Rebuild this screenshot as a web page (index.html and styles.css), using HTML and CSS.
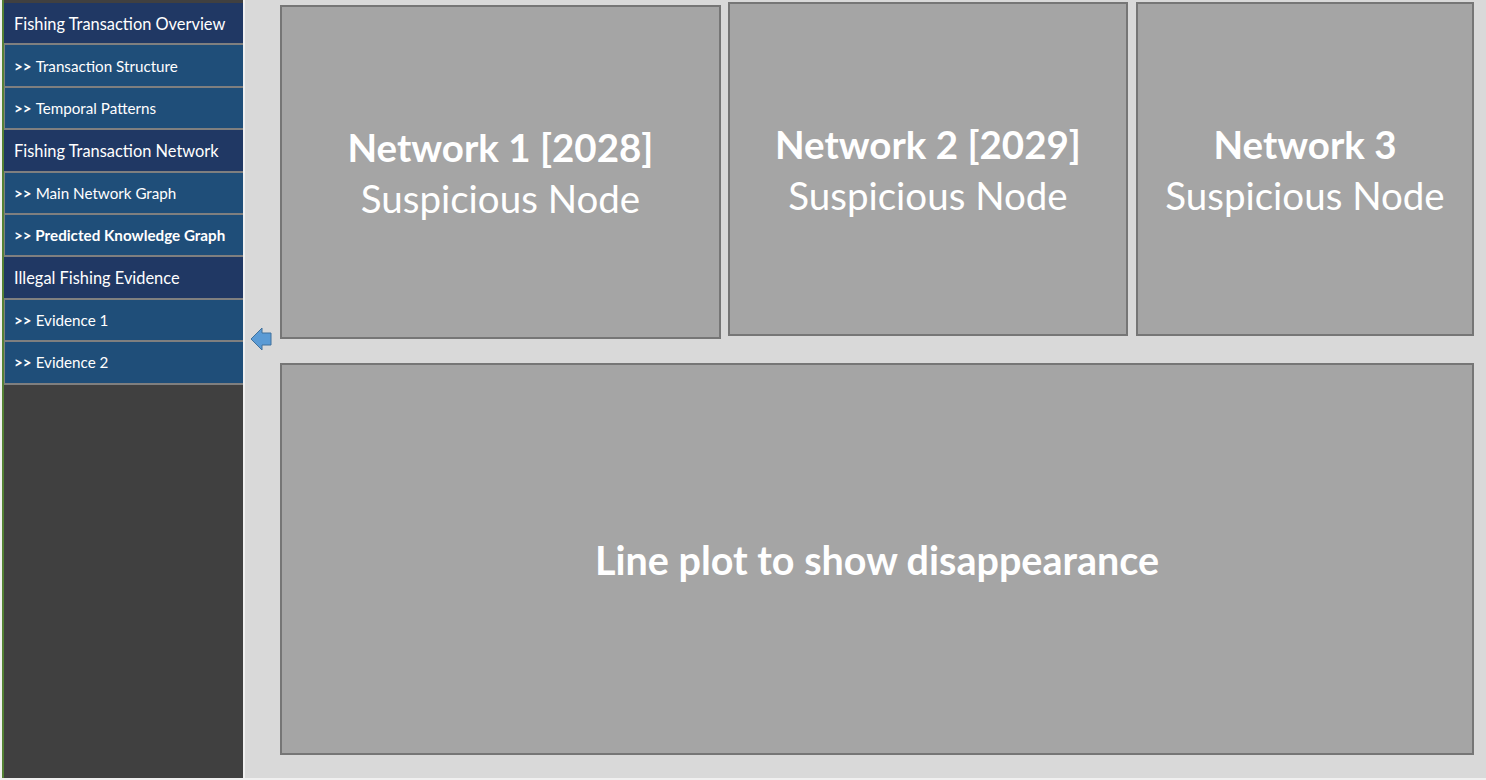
FILE: index.html
```html
<!DOCTYPE html>
<html lang="en">
<head>
    <meta charset="UTF-8">
    <meta name="viewport" content="width=device-width, initial-scale=1.0">
    <link rel="stylesheet" href="styles.css">
    <title>Fishing Transactions</title>
</head>
<body>
    <aside class="menu">
        <div class="secao">Fishing Transaction Overview</div>
        <div class="item"><b>&gt;&gt;</b> Transaction Structure</div>
        <div class="item"><b>&gt;&gt;</b> Temporal Patterns</div>
        <div class="secao">Fishing Transaction Network</div>
        <div class="item"><b>&gt;&gt;</b> Main Network Graph</div>
        <div class="item ativo"><b>&gt;&gt; Predicted Knowledge Graph</b></div>
        <div class="secao">Illegal Fishing Evidence</div>
        <div class="item"><b>&gt;&gt;</b> Evidence 1</div>
        <div class="item"><b>&gt;&gt;</b> Evidence 2</div>
    </aside>

    <main class="painel">
        <!-- seta para recolher o menu -->
        <svg class="seta" width="22" height="24" viewBox="0 0 22 24">
            <polygon points="1,12 12,1 12,6 21,6 21,18 12,18 12,23" fill="#5b9bd5" stroke="#41719c" stroke-width="1"/>
        </svg>

        <div class="linha">
            <div class="caixa rede1">
                <h3>Network 1 [2028]</h3>
                <p>Suspicious Node</p>
            </div>
            <div class="caixa rede2">
                <h3>Network 2 [2029]</h3>
                <p>Suspicious Node</p>
            </div>
            <div class="caixa rede3">
                <h3>Network 3</h3>
                <p>Suspicious Node</p>
            </div>
        </div>

        <div class="caixa grafico">
            <h3>Line plot to show disappearance</h3>
        </div>
    </main>
</body>
</html>
```

FILE: styles.css
```css
body {
    margin: 0;
    padding: 0;
    height: 780px;
    overflow: hidden;
    display: flex;
    background: #f0f0f0;
    font-family: 'Lato', 'Liberation Sans', sans-serif;
    color: #fff;
}

.menu {
    width: 241px;
    height: 778px;
    margin-left: 2px;
    border-left: 2px solid #548235;
    background: #404040;
    padding-top: 3px;
    box-sizing: border-box;
}

.secao, .item {
    height: 40.4px;
    border-bottom: 2px solid #7f7f7f;
    display: flex;
    align-items: center;
    padding-left: 10px;
    white-space: nowrap;
}

.secao {
    background: #203864;
    font-size: 16.4px;
}

.item {
    background: #1f4e79;
    font-size: 15.2px;
    border-left: 1px solid #7f7f7f;
    padding-left: 9px;
}

.item b {
    margin-right: 4px;
}

.item.ativo b {
    margin-right: 0;
}

.painel {
    position: relative;
    margin-left: 2px;
    width: 1241px;
    height: 778px;
    background: #d9d9d9;
    padding: 2px 12px 0 35px;
    box-sizing: border-box;
}

.seta {
    position: absolute;
    left: 5px;
    top: 327px;
}

.linha {
    display: flex;
    align-items: flex-start;
}

.caixa {
    background: #a5a5a5;
    border: 2px solid #767676;
    box-sizing: border-box;
    text-align: center;
}

.caixa h3, .caixa p {
    margin: 0;
    font-size: 38.5px;
    line-height: 51px;
}

.caixa h3 {
    font-weight: bold;
}

.rede1, .rede2, .rede3 {
    height: 334px;
    padding-top: 115px;
}

.rede1 {
    width: 441px;
    margin-top: 3px;
}

.rede2 {
    width: 400px;
    margin-left: 7px;
}

.rede3 {
    width: 338px;
    margin-left: 8px;
}

.grafico {
    margin-top: 24px;
    height: 392px;
    display: flex;
    align-items: center;
    justify-content: center;
}

.grafico h3 {
    font-size: 39.5px;
}
```
